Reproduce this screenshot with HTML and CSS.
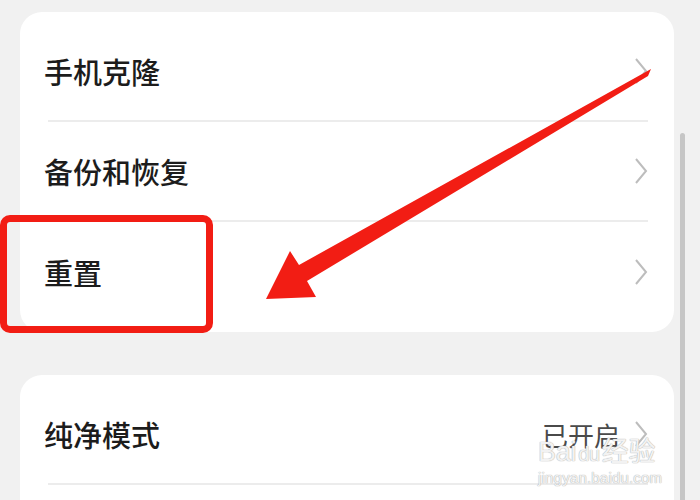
FILE: index.html
```html
<!DOCTYPE html>
<html lang="zh-CN">
<head>
    <meta charset="UTF-8">
    <meta name="viewport" content="width=device-width, initial-scale=1.0">
    <title>系统设置</title>
    <link rel="stylesheet" href="styles.css">
</head>
<body>
    <div class="screen">
        <main class="list">
            <section class="card">
                <div class="row">
                    <span class="label">手机克隆</span>
                    <svg class="chevron" viewBox="0 0 14 28"><polyline points="2,2 12,14 2,26"/></svg>
                </div>
                <div class="row">
                    <span class="label">备份和恢复</span>
                    <svg class="chevron" viewBox="0 0 14 28"><polyline points="2,2 12,14 2,26"/></svg>
                </div>
                <div class="row">
                    <span class="label">重置</span>
                    <svg class="chevron" viewBox="0 0 14 28"><polyline points="2,2 12,14 2,26"/></svg>
                </div>
            </section>

            <section class="card">
                <div class="row">
                    <span class="label">纯净模式</span>
                    <span class="value">已开启</span>
                    <svg class="chevron" viewBox="0 0 14 28"><polyline points="2,2 12,14 2,26"/></svg>
                </div>
                <div class="row"></div>
            </section>
        </main>
        <div class="scrollbar">
            <div class="thumb"></div>
        </div>
    </div>

    <!-- annotation overlay -->
    <div class="highlight-box"></div>
    <svg class="arrow" viewBox="0 0 700 500">
        <polygon points="651,69 299,265 290,251 266,299 316,297 307,281 648,76"/>
    </svg>

    <div class="watermark">
        <div class="wm-logo">Bai<span class="wm-paw">du</span>经验</div>
        <div class="wm-url">jingyan.baidu.com</div>
    </div>
</body>
</html>
```

FILE: styles.css
```css
html, body {
    margin: 0;
    padding: 0;
}

body {
    width: 700px;
    height: 500px;
    overflow: hidden;
    background-color: #f1f1f1;
    font-family: "Noto Sans CJK SC", "Noto Sans", sans-serif;
    position: relative;
}

.screen {
    display: flex;
    height: 500px;
    overflow: hidden;
}

.list {
    width: 654px;
    padding: 12px 0 0 20px;
    display: flex;
    flex-direction: column;
    gap: 43px;
}

.card {
    background-color: #ffffff;
    border-radius: 22px;
    padding: 10px 0;
}

.row {
    height: 100px;
    margin: 0 26px 0 28px;
    display: flex;
    align-items: center;
    border-bottom: 2px solid #ececec;
    box-sizing: border-box;
}

.card .row:last-child {
    border-bottom: none;
}

.label {
    flex: 1;
    font-size: 29px;
    font-weight: 500;
    color: #1c1c1c;
    margin-left: -4px;
}

.value {
    font-size: 26px;
    color: #4a4a4a;
    margin-right: 14px;
}

.chevron {
    width: 14px;
    height: 28px;
    fill: none;
    stroke: #bdbdbd;
    stroke-width: 2;
}

.scrollbar {
    flex: 1;
    padding-top: 133px;
    padding-left: 6px;
}

.thumb {
    width: 5px;
    height: 380px;
    background-color: #c6c6c6;
    border-radius: 3px;
}

.highlight-box {
    position: absolute;
    left: 0;
    top: 215px;
    width: 199px;
    height: 104px;
    border: 7px solid #f21d14;
    border-radius: 10px;
}

.arrow {
    position: absolute;
    left: 0;
    top: 0;
    width: 700px;
    height: 500px;
    fill: #f21d14;
}

.watermark {
    position: absolute;
    left: 538px;
    top: 438px;
    font-family: "Liberation Sans", "Noto Sans CJK SC", sans-serif;
    color: rgba(255, 255, 255, 0.85);
    text-shadow: 0 0 1px #b0b0b0, 0 0 1px #b0b0b0;
}

.wm-logo {
    font-size: 27px;
    line-height: 29px;
    letter-spacing: -0.3px;
}

.wm-paw {
    font-size: 20px;
    margin: 0 2px;
}

.wm-url {
    font-size: 15px;
    line-height: 17px;
    letter-spacing: 0.2px;
}
```
